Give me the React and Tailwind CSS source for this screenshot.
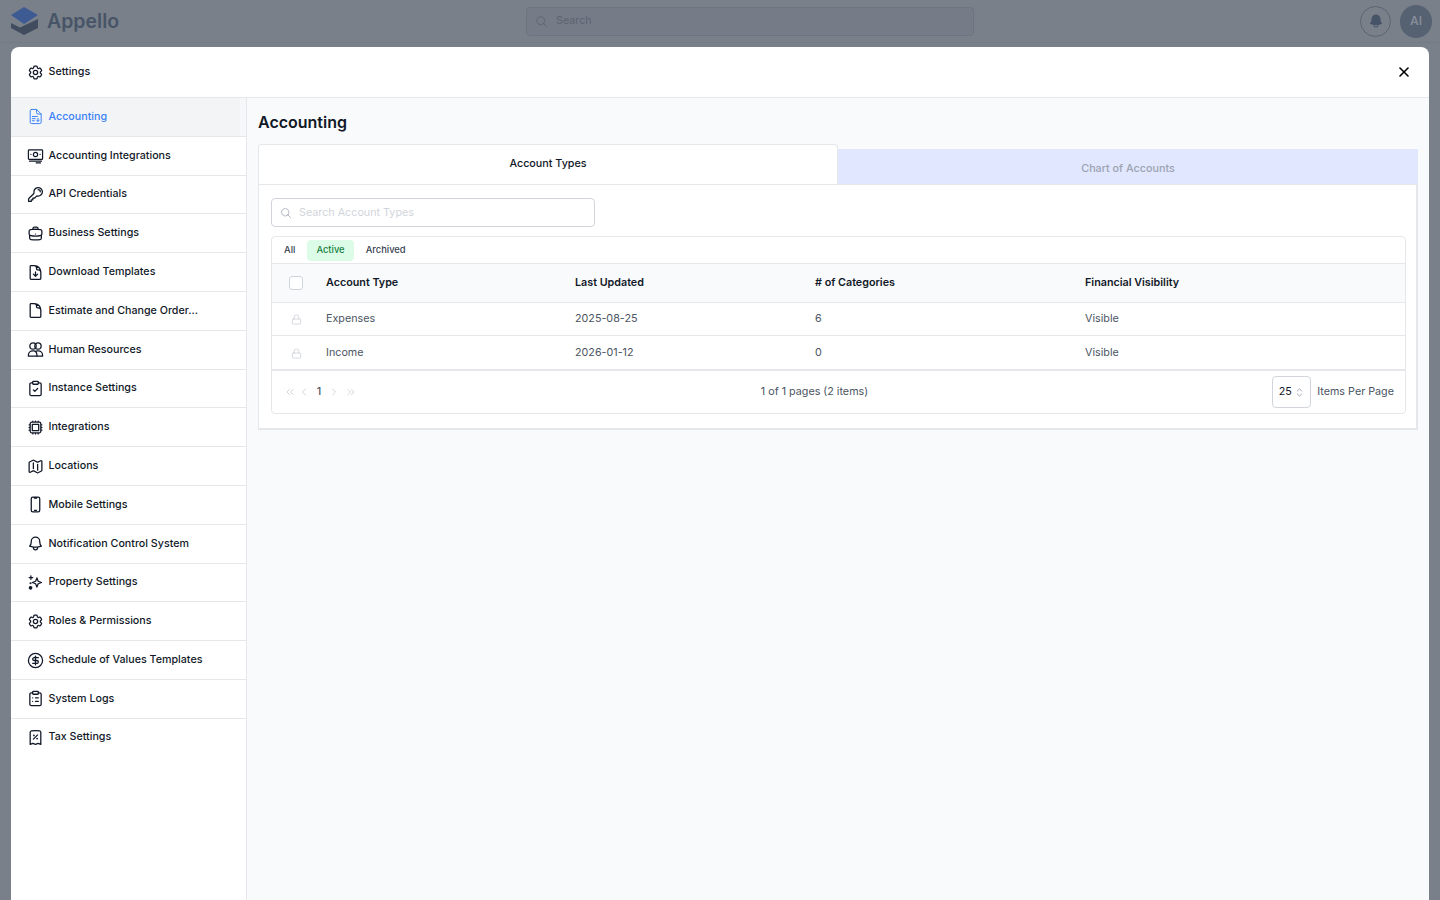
import React from "react";
import { X, ChevronsLeft, ChevronLeft, ChevronRight, ChevronsRight, ChevronsUpDown, Lock, ClipboardCheck, ClipboardList, CircleDollarSign } from "lucide-react";
import {
  HiOutlineCog6Tooth,
  HiOutlineKey,
  HiOutlineBriefcase,
  HiOutlineDocumentArrowDown,
  HiOutlineDocument,
  HiOutlineCpuChip,
  HiOutlineMap,
  HiOutlineDevicePhoneMobile,
  HiOutlineBell,
  HiOutlineReceiptPercent,
  HiOutlineMagnifyingGlass,
  HiBell,
} from "react-icons/hi2";

const AccountingIcon = ({ className }) => (
  <svg className={className} viewBox="0 0 24 24" fill="none" stroke="currentColor" strokeWidth="1.4" strokeLinecap="round" strokeLinejoin="round">
    <path d="M6.5 2h7l6.5 6.5v11.5a2 2 0 0 1-2 2h-11.500a2 2 0 0 1-2-2v-16a2 2 0 0 1 2-2z" />
    <path d="M13.500 2v4.500a2 2 0 0 0 2 2h4.500" />
    <path d="M7.500 12h7M7.500 15h4M7.500 18h3M15.500 14.500v4.500M13.500 17l2 2 2-2" />
  </svg>
);

const MoneyScreenIcon = ({ className }) => (
  <svg className={className} viewBox="0 0 24 24" fill="none" stroke="currentColor" strokeWidth="1.7" strokeLinecap="round" strokeLinejoin="round">
    <rect x="2" y="4" width="20" height="13.500" rx="1" />
    <circle cx="12" cy="10.500" r="3" />
    <path d="M5.500 10.500h.01M18.500 10.500h.01M3.500 20h17M13 22.500h6" />
  </svg>
);

const PeopleIcon = ({ className }) => (
  <svg className={className} viewBox="0 0 24 24" fill="none" stroke="currentColor" strokeWidth="1.8" strokeLinecap="round" strokeLinejoin="round">
    <circle cx="8.500" cy="7" r="4.500" />
    <circle cx="15.500" cy="7" r="4.500" />
    <path d="M2 21.500v-1.500a6 6 0 0 1 6-6h1.500a5 5 0 0 1 2.500.800 5 5 0 0 1 2.500-.800h1.500a6 6 0 0 1 6 6v1.500z" />
    <path d="M12 14.800a6 6 0 0 1 2 4.700v2" />
  </svg>
);

const SparkIcon = ({ className }) => (
  <svg className={className} viewBox="0 0 24 24" fill="none" stroke="currentColor" strokeWidth="1.8" strokeLinecap="round" strokeLinejoin="round">
    <path d="M14 5.500l1.800 4.700 4.700 1.800-4.700 1.800L14 18.500l-1.800-4.700L7.500 12l4.700-1.800z" />
    <path d="M5.500 2.500v5M3 5h5" />
    <circle cx="5" cy="19.500" r="1.700" fill="currentColor" />
    <circle cx="5" cy="13" r="0.600" fill="currentColor" />
  </svg>
);

const items = [
  { label: "Accounting", icon: AccountingIcon, active: true },
  { label: "Accounting Integrations", icon: MoneyScreenIcon },
  { label: "API Credentials", icon: HiOutlineKey },
  { label: "Business Settings", icon: HiOutlineBriefcase },
  { label: "Download Templates", icon: HiOutlineDocumentArrowDown },
  { label: "Estimate and Change Order...", icon: HiOutlineDocument },
  { label: "Human Resources", icon: PeopleIcon },
  { label: "Instance Settings", icon: ClipboardCheck },
  { label: "Integrations", icon: HiOutlineCpuChip },
  { label: "Locations", icon: HiOutlineMap },
  { label: "Mobile Settings", icon: HiOutlineDevicePhoneMobile },
  { label: "Notification Control System", icon: HiOutlineBell },
  { label: "Property Settings", icon: SparkIcon },
  { label: "Roles & Permissions", icon: HiOutlineCog6Tooth },
  { label: "Schedule of Values Templates", icon: CircleDollarSign },
  { label: "System Logs", icon: ClipboardList },
  { label: "Tax Settings", icon: HiOutlineReceiptPercent },
];

const rows = [
  { name: "Expenses", updated: "2025-08-25", count: "6", visibility: "Visible", height: "h-[33px]" },
  { name: "Income", updated: "2026-01-12", count: "0", visibility: "Visible", height: "h-[34px] pt-[1px]" },
];

const Logo = () => (
  <svg width="28" height="28" viewBox="0 0 28 28">
    <path d="M1 8 L14 0 L28 8 L14 17 Z" fill="#3d5a92" />
    <path d="M1 16 L10 20.500 L28 12 L28 21 L14 28 L1 21 Z" fill="#414c5e" />
  </svg>
);

const App = () => {
  return (
    <div className="relative h-[900px] w-full overflow-hidden bg-[#79808a] font-['Inter',sans-serif]">
      <div className="flex h-[43px] items-center justify-between border-b border-[#747b85] pl-[10px] pr-[8px]">
        <div className="flex w-[516px] items-center gap-[9px]">
          <Logo />
          <span className="pt-[1px] text-[19.5px] font-semibold text-[#475467]">Appello</span>
        </div>
        <div className="flex h-[29px] w-[448px] items-center gap-[8px] rounded border border-[#6d7480] bg-[#757c87] pl-2">
          <HiOutlineMagnifyingGlass className="h-[13px] w-[13px] text-[#5c6470]" />
          <span className="text-[10.75px] text-[#5c6470]">Search</span>
        </div>
        <div className="flex w-[458px] items-center justify-end gap-[9px]">
          <div className="flex h-[31px] w-[31px] items-center justify-center rounded-full border border-[#5c6470]">
            <HiBell className="h-[16px] w-[16px] text-[#475467]" />
          </div>
          <div className="flex h-[33px] w-[32px] items-center justify-center rounded-full bg-[#566172] text-[12px] font-semibold text-[#858c97]">
            AI
          </div>
        </div>
      </div>

      <div className="absolute inset-x-[11px] bottom-0 top-[47px] flex flex-col rounded-t-lg bg-white">
        <div className="flex h-[51px] shrink-0 items-center justify-between border-b border-[#e5e7eb] pl-[16px] pr-[17px]">
          <div className="flex items-center gap-[4.5px] text-[#111827]">
            <HiOutlineCog6Tooth className="mt-[1px] h-[17px] w-[17px]" strokeWidth={1.8} />
            <span className="text-[10.7px] font-medium">Settings</span>
          </div>
          <X className="h-[16px] w-[16px] text-black" strokeWidth={2.4} />
        </div>

        <div className="flex min-h-0 flex-1">
          <div className="w-[236px] shrink-0 border-r border-[#e5e7eb] bg-white">
            {items.map((item) => {
              const Icon = item.icon;
              return (
                <div
                  key={item.label}
                  className={`relative flex h-[38.8px] items-center gap-[4.5px] border-b border-[#e5e7eb] pl-[16px] ${item.active ? "bg-[#f3f4f6] text-[#3b82f6]" : "text-[#111827]"} last:border-b-0 last:pb-[2px]`}
                >
                  <Icon className="h-[17px] w-[17px] shrink-0" strokeWidth={item.active ? undefined : 1.8} />
                  <span className="text-[10.7px] font-medium">{item.label}</span>
                  {item.active && <div className="absolute inset-y-0 right-0 w-[6px] bg-[#f6f7f8]" />}
                </div>
              );
            })}
          </div>

          <div className="flex-1 bg-[#f9fafb] px-[11px]">
            <h1 className="flex h-[46px] items-center pt-[2px] text-[16px] font-semibold text-[#111827]">Accounting</h1>
            <div className="flex h-[40px] items-end">
              <div className="flex h-[40px] w-[580px] items-center justify-center rounded-t border border-b-0 border-[#e5e7eb] bg-white text-[10.75px] font-medium text-[#111827]">
                Account Types
              </div>
              <div className="flex h-[35px] flex-1 items-center justify-center bg-[#e0e7ff] pt-[6px] text-[10.75px] font-medium text-[#9ca3af]">
                Chart of Accounts
              </div>
            </div>
            <div className="border-b-2 border-l border-r-2 border-t border-[#e5e7eb] bg-white pb-[14px] pl-[12px] pr-[10px] pt-[13px]">
              <div className="mb-[9px] flex h-[29px] w-[324px] items-center gap-[7px] rounded border border-[#d1d5db] pl-[8px]">
                <HiOutlineMagnifyingGlass className="h-[12px] w-[12px] text-[#9ca3af]" />
                <span className="pt-[1px] text-[10.75px] text-[#d1d5db]">Search Account Types</span>
              </div>
              <div className="rounded border border-[#e5e7eb]">
                <div className="flex h-[27px] items-center gap-[3px] border-b border-[#e5e7eb] pl-[3px] text-[9.4px] font-medium">
                  <span className="px-[9px] text-[#374151]">All</span>
                  <span className="flex h-[21px] items-center rounded bg-[#dcfce7] px-[9px] text-[#15803d]">Active</span>
                  <span className="px-[9px] text-[#374151]">Archived</span>
                </div>
                <div className="grid h-[39px] grid-cols-[54px_249px_240px_270px_1fr] items-center border-b border-[#e5e7eb] bg-[#f9fafb] text-[10.75px] font-semibold text-[#111827]">
                  <div className="flex justify-center pr-[6px]">
                    <div className="h-[14px] w-[14px] rounded-[3px] border border-[#d1d5db] bg-white" />
                  </div>
                  <div>Account Type</div>
                  <div>Last Updated</div>
                  <div># of Categories</div>
                  <div>Financial Visibility</div>
                </div>
                {rows.map((row) => (
                  <div key={row.name} className={`grid ${row.height} grid-cols-[54px_249px_240px_270px_1fr] items-center border-b border-[#e5e7eb] text-[10.75px] text-[#4b5563]`}>
                    <div className="flex justify-center pr-[6px]">
                      <Lock className="h-[11px] w-[11px] text-[#d1d5db]" />
                    </div>
                    <div>{row.name}</div>
                    <div>{row.updated}</div>
                    <div>{row.count}</div>
                    <div>{row.visibility}</div>
                  </div>
                ))}
                <div className="flex h-[43px] items-center justify-between border-t border-[#e5e7eb] pl-[12px] pr-[11px] text-[10.75px] text-[#4b5563]">
                  <div className="flex w-[202px] items-center text-[#d1d5db]">
                    <ChevronsLeft className="h-[12px] w-[12px]" />
                    <ChevronLeft className="ml-[2px] h-[12px] w-[12px]" />
                    <span className="w-[18px] text-center font-medium text-[#4b5563]">1</span>
                    <ChevronRight className="h-[12px] w-[12px]" />
                    <ChevronsRight className="ml-[5px] h-[12px] w-[12px]" />
                  </div>
                  <div>1 of 1 pages (2 items)</div>
                  <div className="flex w-[251px] items-center justify-end gap-[6px]">
                    <div className="flex h-[32px] w-[39px] items-center justify-center gap-[2px] rounded border border-[#d1d5db] text-[#111827]">
                      25
                      <ChevronsUpDown className="h-[11px] w-[11px] text-[#9ca3af]" />
                    </div>
                    <span>Items Per Page</span>
                  </div>
                </div>
              </div>
            </div>
          </div>
        </div>
      </div>
    </div>
  );
};

export default App;
